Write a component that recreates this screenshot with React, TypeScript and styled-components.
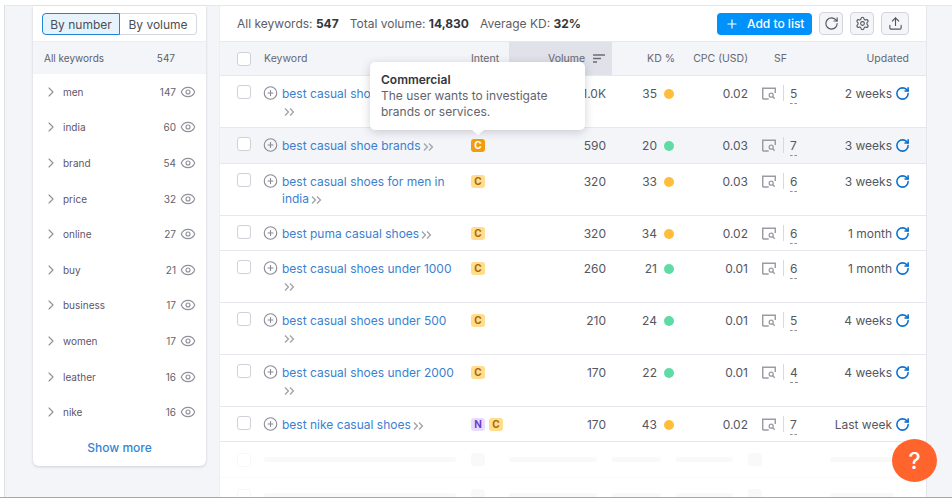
import React from "react";
import styled, { createGlobalStyle } from "styled-components";
import {
  ChevronRight,
  CirclePlus,
  Eye,
  Plus,
  RotateCw,
  Settings,
  Upload,
} from "lucide-react";

const topics = [
  { name: "men", count: 147 },
  { name: "india", count: 60 },
  { name: "brand", count: 54 },
  { name: "price", count: 32 },
  { name: "online", count: 27 },
  { name: "buy", count: 21 },
  { name: "business", count: 17 },
  { name: "women", count: 17 },
  { name: "leather", count: 16 },
  { name: "nike", count: 16 },
];

const keywords = [
  { text: "best casual shoes for women", intents: ["C"], volume: "1.0K", kd: 35, cpc: "0.02", sf: 5, updated: "2 weeks" },
  { text: "best casual shoe brands", intents: ["C"], volume: "590", kd: 20, cpc: "0.03", sf: 7, updated: "3 weeks", hovered: true },
  { text: "best casual shoes for men in india", intents: ["C"], volume: "320", kd: 33, cpc: "0.03", sf: 6, updated: "3 weeks" },
  { text: "best puma casual shoes", intents: ["C"], volume: "320", kd: 34, cpc: "0.02", sf: 6, updated: "1 month" },
  { text: "best casual shoes under 1000", intents: ["C"], volume: "260", kd: 21, cpc: "0.01", sf: 6, updated: "1 month" },
  { text: "best casual shoes under 500", intents: ["C"], volume: "210", kd: 24, cpc: "0.01", sf: 5, updated: "4 weeks" },
  { text: "best casual shoes under 2000", intents: ["C"], volume: "170", kd: 22, cpc: "0.01", sf: 4, updated: "4 weeks" },
  { text: "best nike casual shoes", intents: ["N", "C"], volume: "170", kd: 43, cpc: "0.02", sf: 7, updated: "Last week" },
];

const GlobalStyle = createGlobalStyle`
  html, body {
    margin: 0;
    padding: 0;
    overflow: hidden;
  }
  body {
    font-family: Inter, "Liberation Sans", sans-serif;
    color: #55575f;
  }
  * {
    box-sizing: border-box;
  }
`;

const Frame = styled.div`
  position: relative;
  width: 952px;
  height: 498px;
  padding: 5px 0 0 4px;
  background: #ffffff;
  border-bottom: 1px solid #a8a8a8;
  overflow: hidden;
`;

const Workspace = styled.div`
  display: flex;
  align-items: flex-start;
  gap: 13px;
  height: 100%;
  padding-left: 28px;
  background: #f4f5f9;
  border-top: 1px solid #e6e7ec;
  border-left: 1px solid #dfe0e6;
`;

const Sidebar = styled.aside`
  width: 173px;
  height: 460px;
  display: flex;
  flex-direction: column;
  background: #ffffff;
  border-radius: 0 0 6px 6px;
  box-shadow: 0 1px 3px rgba(40, 45, 70, 0.18);
`;

const Toggle = styled.div`
  display: flex;
  height: 35px;
  padding: 7px 9px 6px;
`;

const ToggleButton = styled.div<{ $active?: boolean }>`
  display: flex;
  align-items: center;
  justify-content: center;
  height: 22px;
  width: ${(p) => (p.$active ? "78px" : "77px")};
  font-size: 12px;
  color: #4c4e57;
  background: ${(p) => (p.$active ? "#e6f3fd" : "#ffffff")};
  border: 1px solid ${(p) => (p.$active ? "#1f86d8" : "#d5d7df")};
  border-left-width: ${(p) => (p.$active ? "1px" : "0")};
  border-radius: ${(p) => (p.$active ? "4px 0 0 4px" : "0 4px 4px 0")};
`;

const AllRow = styled.div`
  display: flex;
  align-items: center;
  justify-content: space-between;
  height: 33px;
  padding: 0 31px 0 11px;
  background: #f4f5f9;
  border-top: 1px solid #eceef2;
  font-size: 10px;
  color: #5d5f68;
`;

const TopicList = styled.ul`
  list-style: none;
  margin: 0;
  padding: 0;
`;

const TopicRow = styled.li`
  display: flex;
  align-items: center;
  height: 35.6px;
  padding: 0 10px 0 10px;
  font-size: 10px;
  color: #5f5568;
`;

const TopicName = styled.span`
  flex: 1;
  margin-left: 4px;
`;

const TopicCount = styled.span`
  margin-right: 4px;
  color: #62646c;
`;

const ShowMore = styled.div`
  text-align: center;
  font-size: 12px;
  font-weight: 500;
  line-height: 36px;
  color: #2f86d4;
`;

const Main = styled.main`
  position: relative;
  width: 708px;
  height: 100%;
  background: #ffffff;
  border-right: 1px solid #e6e7ec;
  border-left: 1px solid #eceef2;
`;

const Toolbar = styled.div`
  display: flex;
  align-items: center;
  height: 35px;
  padding: 0 17px 0 17px;
  gap: 7px;
`;

const Stats = styled.div`
  flex: 1;
  display: flex;
  gap: 11px;
  font-size: 12px;
  color: #5b5d66;

  b {
    font-weight: 700;
    color: #34363e;
  }
`;

const AddButton = styled.button`
  display: flex;
  align-items: center;
  gap: 8px;
  width: 95px;
  height: 22px;
  padding: 0 0 0 8px;
  border: 0;
  border-radius: 4px;
  background: #0091fb;
  color: #ffffff;
  font: 500 12px Inter, sans-serif;
`;

const IconButton = styled.button<{ $wide?: boolean }>`
  display: flex;
  align-items: center;
  justify-content: center;
  width: ${(p) => (p.$wide ? "28px" : "24px")};
  height: 23px;
  padding: 0;
  background: #f4f5f9;
  border: 1px solid #d3d5dc;
  border-radius: 4px;
  color: #53555d;
`;

const Columns = styled.div`
  display: grid;
  grid-template-columns: 44px 207px 38px 103px 64px 72px 82px 79px;
  padding-right: 17px;
`;

const HeaderRow = styled(Columns)`
  height: 35px;
  padding-bottom: 1px;
  align-items: center;
  background: #f4f5f9;
  border-top: 1px solid #e7e8ee;
  border-bottom: 1px solid #e7e8ee;
  font-size: 10.5px;
  color: #666872;
`;

const HeaderCell = styled.div<{ $right?: boolean; $pad?: number }>`
  text-align: ${(p) => (p.$right ? "right" : "left")};
  padding-left: ${(p) => p.$pad ?? 0}px;
`;

const KdHead = styled(HeaderCell)`
  padding-right: 1px;
`;

const VolumeHead = styled.div`
  display: flex;
  align-items: center;
  justify-content: flex-end;
  gap: 8px;
  height: 33px;
  padding-right: 7px;
  background: #e0e1e9;
`;

const CheckCell = styled.div`
  padding-left: 17px;
`;

const Check = styled.span`
  display: block;
  width: 14px;
  height: 14px;
  background: #ffffff;
  border: 1px solid #cfd1d9;
  border-radius: 3px;
`;

const Row = styled(Columns)<{ $hovered?: boolean }>`
  padding-top: 9px;
  padding-bottom: ${(p) => (p.$hovered ? "9px" : "8px")};
  line-height: 17px;
  font-size: 12px;
  background: ${(p) => (p.$hovered ? "#f4f5f9" : "#ffffff")};
  border-bottom: 1px solid #e7e8ee;
`;

const KeywordCell = styled.div`
  display: flex;
  gap: 4px;
  padding-right: 14px;
`;

const KeywordText = styled.span`
  color: #3b7fd0;
`;

const IconSlot = styled.span`
  display: inline-flex;
  flex-shrink: 0;
  width: 14px;
  height: 16px;
  color: #8a8c95;

  svg {
    margin-left: -1px;
  }
`;

const MoreChevrons = styled.svg`
  display: inline-block;
  width: 11px;
  height: 8px;
  margin-left: 2px;
  vertical-align: -0.5px;
  fill: none;
  stroke: #a3a5ad;
  stroke-width: 1.4;
`;

const Intents = styled.div`
  display: flex;
  align-self: start;
  gap: 4px;
  padding-top: 2px;
`;

const Badge = styled.span<{ $kind: string; $active?: boolean }>`
  display: flex;
  align-items: center;
  justify-content: center;
  width: 14px;
  height: 13px;
  border-radius: 3px;
  font-size: 10px;
  font-weight: 700;
  background: ${(p) =>
    p.$active ? "#f39c0b" : p.$kind === "N" ? "#e8dcfd" : "#ffdd8a"};
  color: ${(p) =>
    p.$active ? "#ffffff" : p.$kind === "N" ? "#6b3fd0" : "#a8660d"};
`;

const NumberCell = styled.div`
  text-align: right;
  color: #55575f;
`;

const VolumeCell = styled(NumberCell)`
  padding-right: 6px;
`;

const KdCell = styled.div`
  display: flex;
  justify-content: flex-end;
  align-items: flex-start;
  gap: 7px;
  padding-right: 2px;
`;

const KdDot = styled.span<{ $easy: boolean }>`
  width: 10px;
  height: 10px;
  margin-top: 4px;
  border-radius: 50%;
  background: ${(p) => (p.$easy ? "#5fdba6" : "#ffbd3b")};
`;

const SfCell = styled.div`
  display: flex;
  align-self: start;
  align-items: flex-start;
  height: 17px;
  padding-left: 14px;
  color: #8f919a;
`;

const SerpSlot = styled.span`
  display: flex;
  padding-top: 2px;
`;

const SfDivider = styled.span`
  width: 1px;
  height: 16px;
  margin: 0 6px 0 7px;
  background: #d7d9df;
`;

const SfCount = styled.span`
  height: 19px;
  border-bottom: 1px dashed #8f919a;
  color: #55575f;
`;

const UpdatedCell = styled.div`
  display: flex;
  justify-content: flex-end;
  align-items: flex-start;
  gap: 3px;
  white-space: nowrap;
  color: #55575f;
`;

const RefreshMark = styled(RotateCw)`
  margin: 1px -1px 0 0;
  color: #0a70cc;
`;

const SkeletonRow = styled(Columns)`
  height: 36px;
  align-items: center;
  opacity: 0.4;
  border-bottom: 1px solid #f4f5f7;
`;

const SkeletonBar = styled.span`
  display: block;
  height: 5px;
  margin-right: 15px;
  background: #f1f2f5;
  border-radius: 2px;
`;

const SkeletonBox = styled.span`
  display: block;
  width: 14px;
  height: 13px;
  background: #f1f2f5;
  border-radius: 3px;
`;

const SkeletonCheck = styled(Check)`
  margin-left: 17px;
  border-color: #eff0f3;
`;

const Tooltip = styled.div`
  position: absolute;
  left: 150px;
  top: 56px;
  width: 215px;
  height: 68px;
  padding: 10px 11px;
  background: #ffffff;
  border-radius: 5px;
  box-shadow: 0 2px 10px rgba(40, 45, 70, 0.22);
  font-size: 12px;
  line-height: 16px;
  color: #62646c;

  &::after {
    content: "";
    position: absolute;
    left: 102px;
    bottom: -5px;
    border-left: 6px solid transparent;
    border-right: 6px solid transparent;
    border-top: 5px solid #ffffff;
  }
`;

const TooltipTitle = styled.div`
  font-weight: 600;
  color: #33353c;
`;

const HelpButton = styled.div`
  position: absolute;
  left: 892px;
  top: 439px;
  width: 45px;
  height: 43px;
  display: flex;
  align-items: center;
  justify-content: center;
  border-radius: 50%;
  background: #ff642d;
  color: #ffffff;
  font-size: 23px;
  font-weight: 500;
`;

const SerpIcon = () => (
  <svg width="14" height="13" viewBox="0 0 14 13" fill="none" stroke="#9a9ca4" strokeWidth="1.3">
    <path d="M.7 12V1.2h12.6V6M.7 12h6" strokeWidth="1.5" />
    <circle cx="9.2" cy="8.2" r="2" />
    <path d="M10.7 9.7l2 2" />
  </svg>
);

const SortIcon = () => (
  <svg width="12" height="9" viewBox="0 0 12 9" fill="none" stroke="#6b6d76" strokeWidth="1.3">
    <path d="M0 1h12M0 4.5h8M0 8h4" />
  </svg>
);

const App: React.FC = () => {
  return (
    <Frame>
      <GlobalStyle />
      <Workspace>
        <Sidebar>
          <Toggle>
            <ToggleButton $active>By number</ToggleButton>
            <ToggleButton>By volume</ToggleButton>
          </Toggle>
          <AllRow>
            <span>All keywords</span>
            <span>547</span>
          </AllRow>
          <TopicList>
            {topics.map((t) => (
              <TopicRow key={t.name}>
                <ChevronRight size={16} color="#8f919a" strokeWidth={1.7} />
                <TopicName>{t.name}</TopicName>
                <TopicCount>{t.count}</TopicCount>
                <Eye size={16} color="#8f919a" strokeWidth={1.7} />
              </TopicRow>
            ))}
          </TopicList>
          <ShowMore>Show more</ShowMore>
        </Sidebar>
        <Main>
          <Toolbar>
            <Stats>
              <span>
                All keywords: <b>547</b>
              </span>
              <span>
                Total volume: <b>14,830</b>
              </span>
              <span>
                Average KD: <b>32%</b>
              </span>
            </Stats>
            <AddButton>
              <Plus size={14} strokeWidth={2} />
              Add to list
            </AddButton>
            <IconButton>
              <RotateCw size={15} strokeWidth={1.8} />
            </IconButton>
            <IconButton>
              <Settings size={15} strokeWidth={1.7} />
            </IconButton>
            <IconButton $wide>
              <Upload size={15} strokeWidth={1.8} />
            </IconButton>
          </Toolbar>
          <HeaderRow>
            <CheckCell>
              <Check />
            </CheckCell>
            <HeaderCell>Keyword</HeaderCell>
            <HeaderCell>Intent</HeaderCell>
            <VolumeHead>
              Volume
              <SortIcon />
            </VolumeHead>
            <KdHead $right>KD %</KdHead>
            <HeaderCell $right>CPC (USD)</HeaderCell>
            <HeaderCell $pad={26}>SF</HeaderCell>
            <HeaderCell $right>Updated</HeaderCell>
          </HeaderRow>
          {keywords.map((k) => (
            <Row key={k.text} $hovered={k.hovered}>
              <CheckCell>
                <Check />
              </CheckCell>
              <KeywordCell>
                <IconSlot>
                  <CirclePlus size={16} strokeWidth={1.8} />
                </IconSlot>
                <KeywordText>
                  {k.text}
                  <MoreChevrons viewBox="0 0 11 8">
                    <path d="M1 .6l3.4 3.4L1 7.4M6 .6l3.4 3.4L6 7.4" />
                  </MoreChevrons>
                </KeywordText>
              </KeywordCell>
              <Intents>
                {k.intents.map((i) => (
                  <Badge key={i} $kind={i} $active={k.hovered}>
                    {i}
                  </Badge>
                ))}
              </Intents>
              <VolumeCell>{k.volume}</VolumeCell>
              <KdCell>
                {k.kd}
                <KdDot $easy={k.kd <= 24} />
              </KdCell>
              <NumberCell>{k.cpc}</NumberCell>
              <SfCell>
                <SerpSlot>
                  <SerpIcon />
                </SerpSlot>
                <SfDivider />
                <SfCount>{k.sf}</SfCount>
              </SfCell>
              <UpdatedCell>
                {k.updated}
                <RefreshMark size={15} strokeWidth={2.5} />
              </UpdatedCell>
            </Row>
          ))}
          {[0, 1].map((n) => (
            <SkeletonRow key={n}>
              <SkeletonCheck />
              <SkeletonBar />
              <SkeletonBox />
              <SkeletonBar />
              <SkeletonBar />
              <SkeletonBar />
              <SkeletonBox />
              <SkeletonBar />
            </SkeletonRow>
          ))}
          <Tooltip>
            <TooltipTitle>Commercial</TooltipTitle>
            The user wants to investigate brands or services.
          </Tooltip>
        </Main>
      </Workspace>
      <HelpButton>?</HelpButton>
    </Frame>
  );
};

export default App;
